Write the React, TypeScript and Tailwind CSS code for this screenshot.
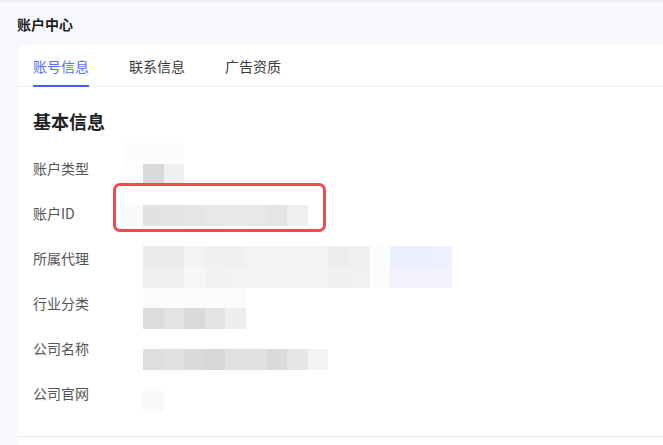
const FONT = { fontFamily: '"Noto Sans CJK SC", "Noto Sans", sans-serif' };

const tabs = ["账号信息", "联系信息", "广告资质"];
const labels = ["账户类型", "账户ID", "所属代理", "行业分类", "公司名称", "公司官网"];

// pixelated (mosaic) cover over the values, one entry per grid row
const W = "transparent";
const mosaic: string[][] = [
  ["#fcfcfc", "#fcfcfc", "#fcfcfc"],
  ["#fdfdfd", "#d9d9d9", "#f0f0f0"],
  [],
  ["#fafafa", "#e2e2e2", "#e3e3e3", "#e6e6e6", "#e8e8e8", "#e9e9e9", "#e8e8e8", "#e5e5e5", "#efefef"],
  [],
  [W, "#ebebeb", "#ebebeb", "#f3f3f3", "#f0f0f0", "#f0f0f0", "#f3f3f3", "#f3f3f3", "#f3f3f3", "#f4f4f4", "#ececec", "#efefef", "#fbfbfb", "#eceffd", "#eceffd", "#edf0fd"],
  [W, "#f0f0f0", "#f0f0f0", "#f7f7f7", "#f2f2f2", "#f3f3f3", "#f4f4f4", "#f4f4f4", "#f4f4f4", "#f5f5f5", "#f0f0f0", "#f1f1f1", "#fcfcfc", "#f1f2fe", "#f1f2fe", "#f2f3fe"],
  [W, "#fbfbfb", "#fbfbfb", "#fbfbfb", "#fbfbfb", "#fbfbfb"],
  [W, "#dcdcdc", "#e3e3e3", "#d9d9d9", "#e3e3e3", "#eeeeee"],
  [],
  [W, "#dedede", "#e0e0e0", "#dadada", "#d7d7d7", "#e0e0e0", "#e1e1e1", "#dadada", "#e6e6e6", "#f3f3f3"],
  [],
  [W, "#f9f9f9"],
];

export default function App() {
  return (
    <div className="flex h-[445px] w-full flex-col overflow-hidden bg-[#f7f8fb] border-t-2 border-[#eeeff4]" style={FONT}>
      <div className="px-[17px] pt-[11px] pb-[10px] text-[14px] leading-[22px] font-semibold text-[#1f1f1f]">
        账户中心
      </div>

      <div className="ml-[17px] flex-1 rounded-tl-[8px] bg-white">
        {/* Tabs */}
        <div className="flex h-[42px] gap-[40px] border-b border-[#ededf2] px-[16px]">
          {tabs.map((t, i) => (
            <div
              key={t}
              className={
                i === 0
                  ? "pt-[10px] h-[42px] text-[14px] leading-[22px] text-[#5470f6] border-b-2 border-[#4262f6]"
                  : "pt-[10px] h-[42px] text-[14px] leading-[22px] text-[#3a3a3a]"
              }
            >
              {t}
            </div>
          ))}
        </div>

        {/* Basic info */}
        <div className="relative border-b border-[#e9e9f2] px-[16px] pt-[21px] pb-[21px]">
          <div className="mb-[11px] text-[18px] leading-[26px] font-semibold text-[#1f1f1f]">基本信息</div>
          <div className="flex flex-col">
            {labels.map((l) => (
              <div key={l} className="flex h-[45px] items-center text-[14px] leading-[22px] text-[#555555]">
                {l}
              </div>
            ))}
          </div>

          {/* mosaic cover */}
          <div className="absolute left-[105.4px] top-[56.4px] flex flex-col">
            {mosaic.map((row, r) => (
              <div key={r} className="flex h-[20.6px]">
                {row.map((c, k) => (
                  <div key={k} className="h-[20.6px] w-[20.6px]" style={{ backgroundColor: c }} />
                ))}
              </div>
            ))}
          </div>

          {/* highlight box */}
          <div className="absolute left-[96px] top-[96px] h-[49px] w-[213px] rounded-[7px] border-[3px] border-[#f24a4a]" />
        </div>
      </div>
    </div>
  );
}
